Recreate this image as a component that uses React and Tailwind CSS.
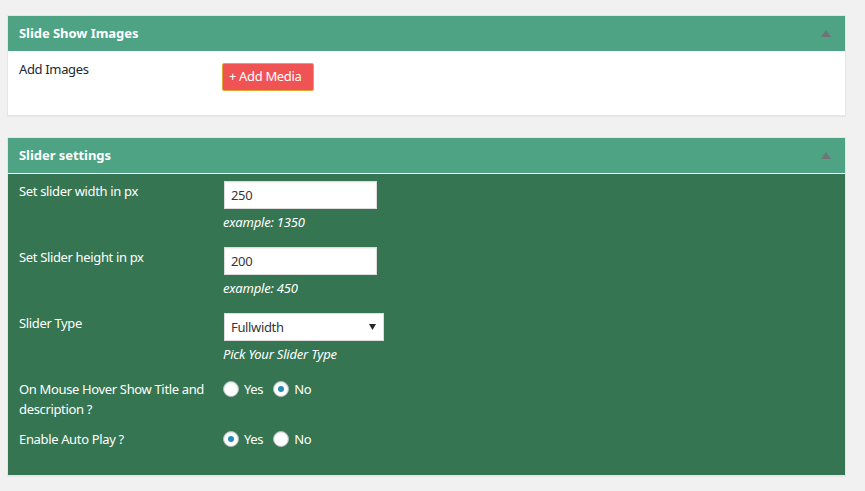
import React from "react";

const font = { fontFamily: '"Noto Sans", "Open Sans", sans-serif' };

function Caret() {
  return (
    <svg width="10" height="7" viewBox="0 0 10 7" className="block">
      <path d="M5 0 L10 7 L0 7 Z" fill="#6f7479" />
    </svg>
  );
}

function Header({ title }) {
  return (
    <div className="h-[35px] bg-[#4ea384] flex items-center justify-between pl-[11px] pr-[14px]">
      <span className="text-white font-bold text-[13px] tracking-[-0.05px]">{title}</span>
      <Caret />
    </div>
  );
}

function Radio({ checked, label }) {
  return (
    <label className="flex items-center gap-[5px] mr-[10px]">
      <span className="w-[16px] h-[16px] rounded-full bg-white border border-[#b4b9be] shadow-[inset_0_1px_2px_rgba(0,0,0,0.1)] flex items-center justify-center">
        {checked && <span className="w-[6px] h-[6px] rounded-full bg-[#1e8cbe]" />}
      </span>
      <span className="text-white text-[13px] leading-[20px]">{label}</span>
    </label>
  );
}

function TextInput({ value }) {
  return (
    <div className="w-[153px] h-[28px] bg-white border border-[#dddddd] shadow-[inset_0_1px_2px_rgba(0,0,0,0.07)] flex items-center px-[6px] text-[13px] text-[#32373c]">
      {value}
    </div>
  );
}

function Help({ children }) {
  return <div className="mt-[3px] text-white italic text-[13px] leading-[20px] -ml-[1px] tracking-[-0.2px]">{children}</div>;
}

export default function App() {
  return (
    <div className="w-[865px] min-h-[491px] bg-[#f1f1f1] pt-[15px] pl-[7px]" style={font}>
      <div className="w-[839px] border border-[#e5e5e5] shadow-[0_1px_1px_rgba(0,0,0,0.04)] bg-white">
        <Header title="Slide Show Images" />
        <div className="h-[64px] flex pl-[11px] pt-[8px] tracking-[-0.35px]">
          <div className="w-[204px] text-[13px] leading-[20px] text-[#23282d]">Add Images</div>
          <div className="pt-[4px] -ml-[1px]">
            <div className="w-[92px] h-[28px] pl-[6px] flex items-center bg-[#f05353] border border-[#e5a534] rounded-[2px] text-white text-[13px]">
              + Add Media
            </div>
          </div>
        </div>
      </div>

      <div className="w-[839px] mt-[21px] border border-[#e5e5e5] shadow-[0_1px_1px_rgba(0,0,0,0.04)]">
        <Header title="Slider settings" />
        <div className="h-[1px] bg-white" />
        <div className="bg-[#357551] h-[301px] pt-[7px] pl-[11px] text-white text-[13px] leading-[20px] tracking-[-0.35px]">
          <div className="flex h-[66px]">
            <div className="w-[205px]">Set slider width in px</div>
            <div>
              <TextInput value="250" />
              <Help>example: 1350</Help>
            </div>
          </div>
          <div className="flex h-[66px]">
            <div className="w-[205px]">Set Slider height in px</div>
            <div>
              <TextInput value="200" />
              <Help>example: 450</Help>
            </div>
          </div>
          <div className="flex h-[66px]">
            <div className="w-[205px]">Slider Type</div>
            <div>
              <div className="w-[160px] h-[28px] bg-white border border-[#dddddd] flex items-center justify-between pl-[6px] pr-[7px] text-[13px] text-[#32373c]">
                <span>Fullwidth</span>
                <svg width="7" height="6" viewBox="0 0 7 6"><path d="M0 0 L7 0 L3.5 6 Z" fill="#23282d" /></svg>
              </div>
              <Help>Pick Your Slider Type</Help>
            </div>
          </div>
          <div className="flex h-[50px]">
            <div className="w-[205px]">On Mouse Hover Show Title and description ?</div>
            <div className="flex items-start -ml-[1px]">
              <Radio checked={false} label="Yes" />
              <Radio checked={true} label="No" />
            </div>
          </div>
          <div className="flex">
            <div className="w-[205px]">Enable Auto Play ?</div>
            <div className="flex items-start -ml-[1px]">
              <Radio checked={true} label="Yes" />
              <Radio checked={false} label="No" />
            </div>
          </div>
        </div>
      </div>
    </div>
  );
}
